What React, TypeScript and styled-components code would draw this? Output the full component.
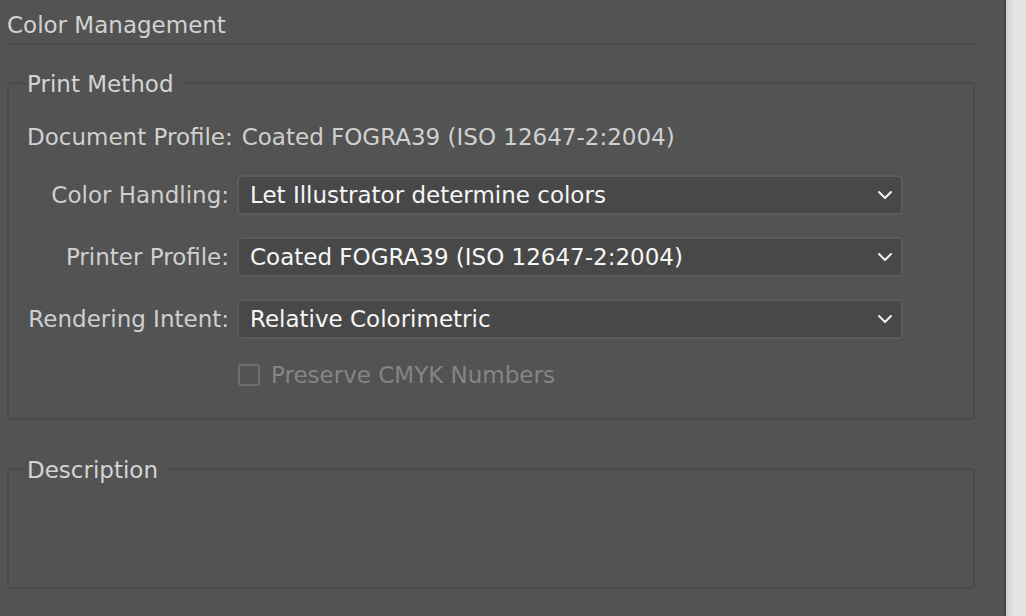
import React from "react";
import styled, { createGlobalStyle } from "styled-components";

const Global = createGlobalStyle`
  html, body { margin: 0; padding: 0; background: #535353; }
  body { font-family: "DejaVu Sans", "Noto Sans", sans-serif; -webkit-font-smoothing: antialiased; }
  * { box-sizing: border-box; }
`;

const Page = styled.div`
  display: flex;
  width: 1026px;
  height: 616px;
  overflow: hidden;
`;

const Main = styled.div`
  width: 1004px;
  flex: none;
  background: #535353;
  padding: 0 29px 0 7px;
  display: flex;
  flex-direction: column;
`;

const Strip = styled.div`
  flex: 1;
  border-left: 2px solid #454545;
  background: linear-gradient(to right, #cfcfcf, #e4e4e4 40%, #e2e2e2);
`;

const Title = styled.div`
  height: 45px;
  display: flex;
  align-items: center;
  padding-top: 6px;
  font-size: 23px;
  color: #d2d2d2;
  border-bottom: 2px solid #4b4b4b;
`;

const Group = styled.fieldset<{ $height: number; $top: number }>`
  margin: ${(p) => p.$top}px 0 0 0;
  height: ${(p) => p.$height}px;
  border: 2px solid #4a4a4a;
  border-radius: 4px;
  padding: 0 0 0 18px;
  min-width: 0;
`;

const Legend = styled.legend`
  margin-left: 0;
  padding: 2px 10px 0 0;
  font-size: 23px;
  color: #d4d4d4;
  line-height: 28px;
`;

const DocRow = styled.div`
  display: flex;
  gap: 9px;
  margin-top: 26px;
  font-size: 23px;
  color: #d0d0d0;
`;

const Form = styled.div`
  display: grid;
  grid-template-columns: 202px 666px;
  column-gap: 8px;
  row-gap: 22px;
  margin-top: 25px;
  align-items: center;
`;

const Label = styled.div`
  justify-self: end;
  font-size: 23px;
  color: #cfcfcf;
`;

const Select = styled.div`
  height: 40px;
  background: #484848;
  border: 2px solid #5c5c5c;
  border-radius: 5px;
  display: flex;
  align-items: center;
  justify-content: space-between;
  padding: 0 8px 0 11px;
  font-size: 23px;
  color: #f6f6f6;
`;

const Chevron = styled.svg`
  width: 16px;
  height: 10px;
  flex: none;
`;

const CheckRow = styled.div`
  grid-column: 2;
  display: flex;
  align-items: center;
  gap: 11px;
  margin-top: 1px;
  padding-left: 1px;
  font-size: 23px;
  color: #858585;
`;

const Box = styled.span`
  width: 22px;
  height: 22px;
  border: 2px solid #6d6d6d;
  border-radius: 3px;
  flex: none;
`;

const Down = () => (
  <Chevron viewBox="0 0 16 10">
    <path d="M2 2 L8 8 L14 2" fill="none" stroke="#f2f2f2" strokeWidth="2" strokeLinecap="round" strokeLinejoin="round" />
  </Chevron>
);

const rows = [
  ["Color Handling:", "Let Illustrator determine colors"],
  ["Printer Profile:", "Coated FOGRA39 (ISO 12647-2:2004)"],
  ["Rendering Intent:", "Relative Colorimetric"],
];

export default function App() {
  return (
    <Page>
      <Global />
      <Main>
        <Title>Color Management</Title>
        <Group $top={23} $height={352}>
          <Legend>Print Method</Legend>
          <DocRow>
            <span>Document Profile:</span>
            <span>Coated FOGRA39 (ISO 12647-2:2004)</span>
          </DocRow>
          <Form>
            {rows.map(([l, v]) => (
              <React.Fragment key={l}>
                <Label>{l}</Label>
                <Select>
                  <span>{v}</span>
                  <Down />
                </Select>
              </React.Fragment>
            ))}
            <CheckRow>
              <Box />
              <span>Preserve CMYK Numbers</span>
            </CheckRow>
          </Form>
        </Group>
        <Group $top={34} $height={135}>
          <Legend>Description</Legend>
        </Group>
      </Main>
      <Strip />
    </Page>
  );
}
